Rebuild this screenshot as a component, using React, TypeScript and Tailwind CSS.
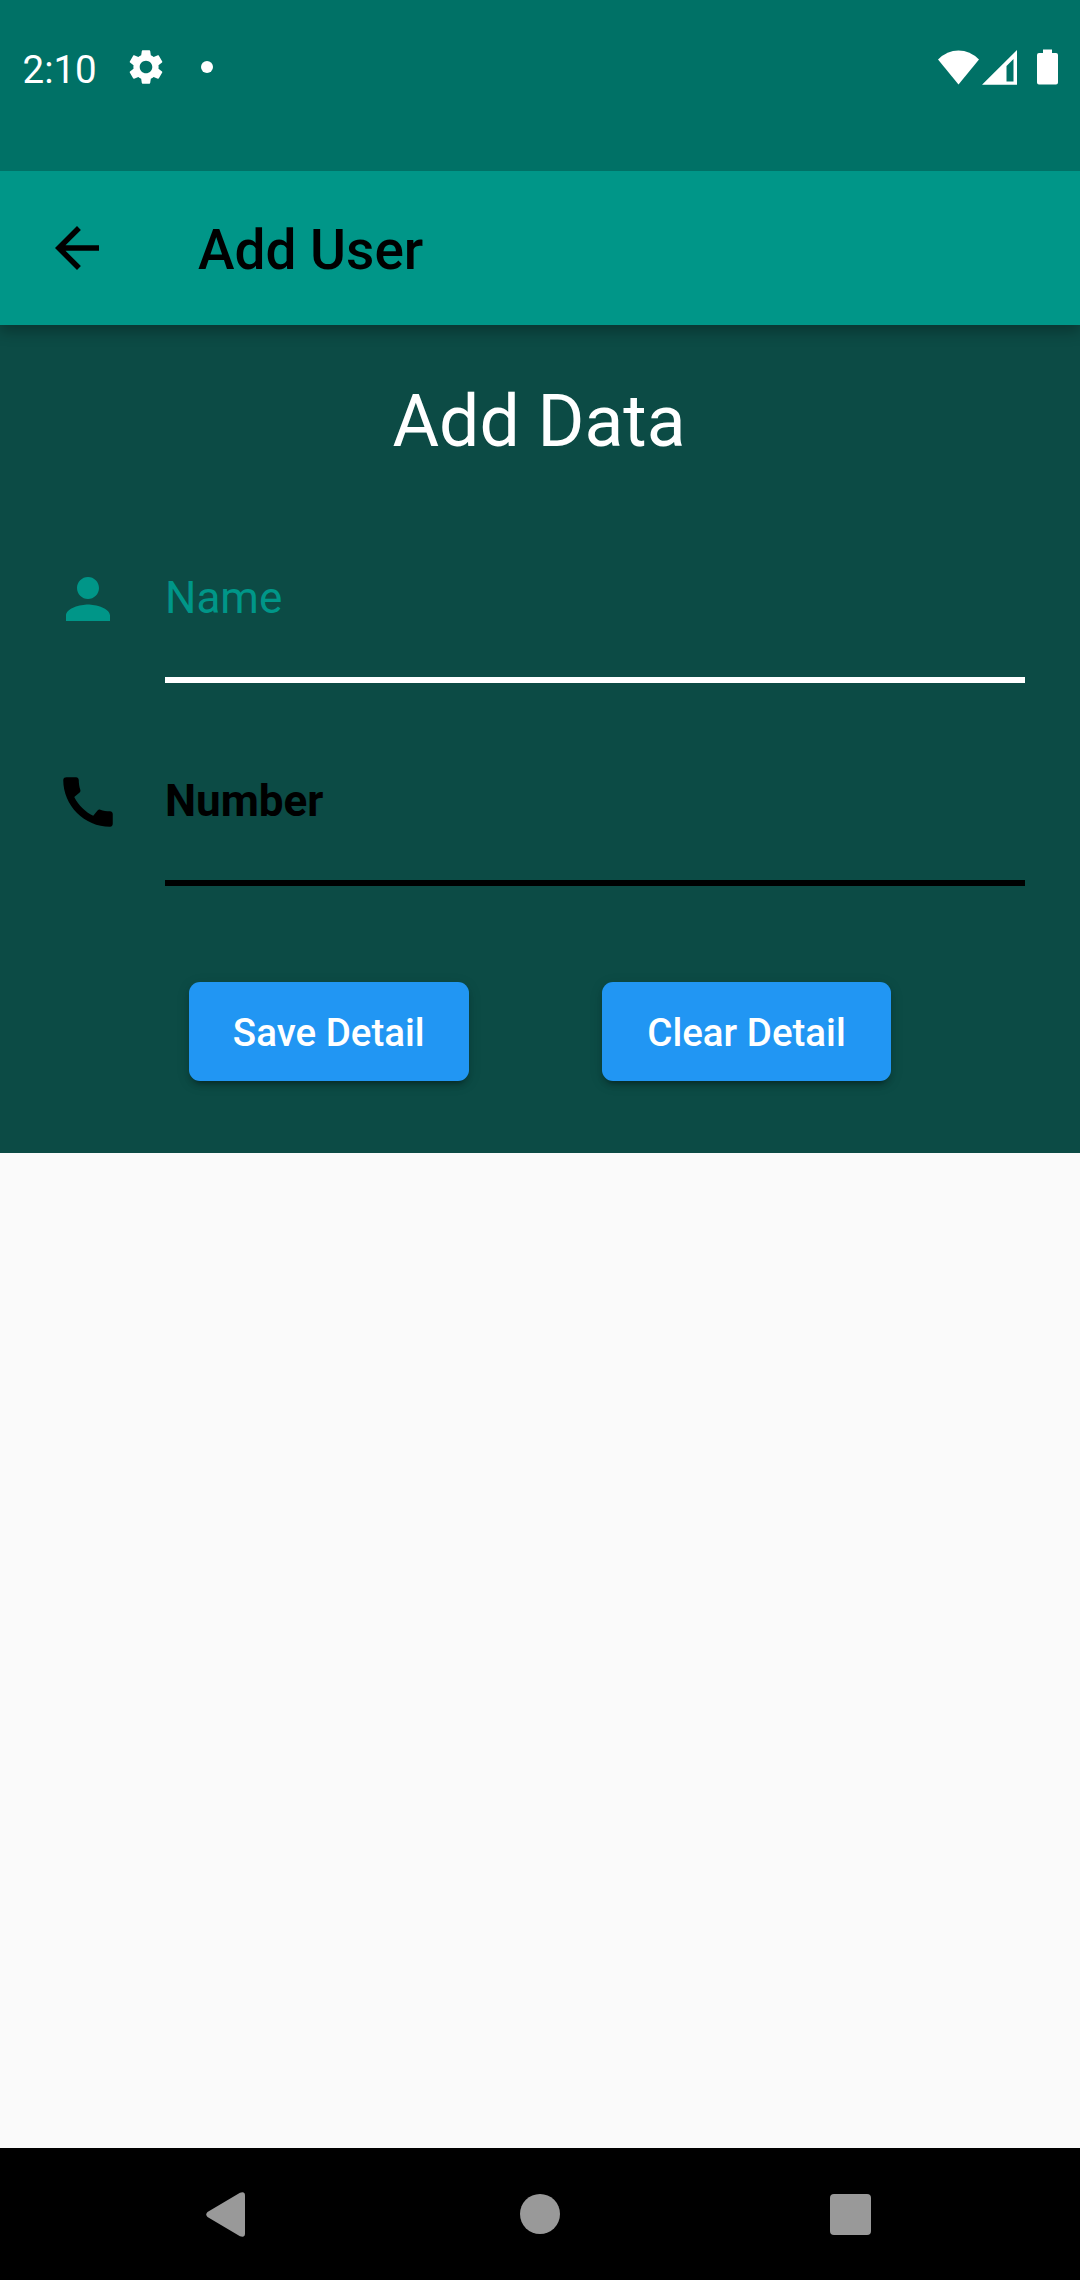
import type { ReactNode } from "react";

function StatusBar() {
  return (
    <header className="relative z-20 flex h-[171px] items-start bg-[#007166] pt-[45px] text-white">
      <span className="ml-[22.5px] w-[75px] text-[38.5px] leading-[50px] whitespace-nowrap">2:10</span>
      <svg className="mt-[1px] ml-[27.5px] size-[42px]" viewBox="0 0 24 24" fill="currentColor">
        <path d="M19.14 12.94c.04-.3.06-.61.06-.94 0-.32-.02-.64-.07-.94l2.03-1.58c.18-.14.23-.41.12-.61l-1.92-3.32c-.12-.22-.37-.29-.59-.22l-2.39.96c-.5-.38-1.03-.7-1.62-.94l-.36-2.54c-.04-.24-.24-.41-.48-.41h-3.84c-.24 0-.43.17-.47.41l-.36 2.54c-.59.24-1.13.57-1.62.94l-2.39-.96c-.22-.08-.47 0-.59.22L2.74 8.87c-.12.21-.08.47.12.61l2.03 1.58c-.05.3-.09.63-.09.94s.02.64.07.94l-2.03 1.58c-.18.14-.23.41-.12.61l1.92 3.32c.12.22.37.29.59.22l2.39-.96c.5.38 1.03.7 1.62.94l.36 2.54c.05.24.24.41.48.41h3.84c.24 0 .44-.17.47-.41l.36-2.54c.59-.24 1.13-.56 1.62-.94l2.39.96c.22.08.47 0 .59-.22l1.92-3.32c.12-.22.07-.47-.12-.61l-2.01-1.58zM12 15.6c-1.98 0-3.6-1.62-3.6-3.6s1.62-3.6 3.6-3.6 3.6 1.62 3.6 3.6-1.62 3.6-3.6 3.6z" />
      </svg>
      <span className="mt-4 ml-[34px] size-3 rounded-full bg-white" />
      <div className="mt-[4px] mr-[22px] ml-auto flex items-start">
        <svg className="h-[36px] w-[41px]" viewBox="0 0 41 36" fill="currentColor">
          <path d="M20.5 35.5 0 10.5Q9 1.5 20.5 1.5T41 10.5Z" />
        </svg>
        <svg className="ml-[3px] h-[36px] w-[35px]" viewBox="0 0 35 36" fill="currentColor" fillRule="evenodd">
          <path d="M0 35.7 35 1V35.7ZM24.5 17V32.5H31.5V10Z" />
        </svg>
        <svg className="ml-5 h-[36px] w-[21px]" viewBox="0 0 21 36" fill="currentColor">
          <path d="M6 0.5H15V4H19Q21 4 21 6V33.5Q21 35.5 19 35.5H2Q0 35.5 0 33.5V6Q0 4 2 4H6Z" />
        </svg>
      </div>
    </header>
  );
}

function AppBar() {
  return (
    <div className="relative z-10 flex h-[154px] items-center bg-[#009688] pl-[44px] text-black shadow-[0_6px_14px_rgba(0,0,0,0.3)]">
      <svg className="size-[66px]" viewBox="0 0 24 24" fill="currentColor">
        <path d="M20 11H7.83l5.59-5.59L12 4l-8 8 8 8 1.41-1.41L7.83 13H20v-2z" />
      </svg>
      <h1 className="mt-[3px] ml-[88px] text-[55px] leading-[64px] font-medium whitespace-nowrap">Add User</h1>
    </div>
  );
}

type FieldProps = { label: string; icon: ReactNode; tone: string; labelStyle: string; line: string };

function Field({ label, icon, tone, labelStyle, line }: FieldProps) {
  return (
    <label className={`flex items-start pr-[55px] pl-[55px] ${tone}`}>
      <svg className="size-[66px] shrink-0" viewBox="0 0 24 24" fill="currentColor">
        {icon}
      </svg>
      <span className={`ml-[44px] block flex-1 pt-[6px] text-[44px] leading-[52px] ${labelStyle}`}>
        {label}
        <span className={`mt-[53px] block h-[5.5px] ${line}`} />
      </span>
    </label>
  );
}

function RaisedButton({ children, size }: { children: ReactNode; size: string }) {
  return (
    <button
      className={`h-[99px] rounded-[11px] bg-[#2196f3] pt-[3px] text-[38.5px] leading-[46px] font-medium whitespace-nowrap text-white shadow-[0_8px_3px_-6px_rgba(0,0,0,0.2),0_5px_5px_rgba(0,0,0,0.14),0_3px_14px_rgba(0,0,0,0.12)] ${size}`}
    >
      {children}
    </button>
  );
}

function NavigationBar() {
  return (
    <nav className="flex h-[132px] items-center justify-between bg-black pr-[209px] pl-[206px] text-[#999999]">
      <svg className="h-[45px] w-[39px]" viewBox="0 0 39 45" fill="currentColor">
        <path d="M1.5 20 34 0.7Q39-1 39 3.5V41.5Q39 46 34 44.3L1.5 25Q-1 22.5 1.5 20Z" />
      </svg>
      <span className="ml-[5px] size-10 rounded-full bg-[#999999]" />
      <span className="size-[41px] rounded-[4px] bg-[#999999]" />
    </nav>
  );
}

export default function App() {
  return (
    <div className="flex h-[2280px] w-[1080px] flex-col overflow-hidden bg-[#fafafa] font-['Roboto',sans-serif]">
      <StatusBar />
      <AppBar />
      <main className="h-[827.5px] bg-[#0c4b45]">
        <h2 className="pt-[55px] pr-[2px] text-center text-[71.5px] leading-[84px] text-white">Add Data</h2>
        <div className="mt-[102px] h-[203px]">
          <Field
            label="Name"
            tone="text-[#009688]"
            labelStyle="font-normal"
            line="bg-white"
            icon={<path d="M12 12c2.21 0 4-1.79 4-4s-1.79-4-4-4-4 1.79-4 4 1.79 4 4 4zm0 2c-2.67 0-8 1.34-8 4v2h16v-2c0-2.66-5.33-4-8-4z" />}
          />
        </div>
        <div className="h-[213px]">
          <Field
            label="Number"
            tone="text-black"
            labelStyle="font-bold"
            line="bg-black"
            icon={<path d="M20.01 15.38c-1.23 0-2.42-.2-3.53-.56-.35-.12-.74-.03-1.01.24l-1.57 1.97c-2.83-1.35-5.48-3.9-6.89-6.83l1.95-1.66c.27-.28.35-.67.24-1.02-.37-1.11-.56-2.3-.56-3.53 0-.54-.45-.99-.99-.99H4.19C3.65 3 3 3.24 3 3.99 3 13.28 10.73 21 20.01 21c.71 0 .99-.63.99-1.18v-3.45c0-.54-.45-.99-.99-.99z" />}
          />
        </div>
        <div className="flex justify-between pr-[189px] pl-[188.5px]">
          <RaisedButton size="w-[280.5px]">Save Detail</RaisedButton>
          <RaisedButton size="w-[289px]">Clear Detail</RaisedButton>
        </div>
      </main>
      <div className="flex-1" />
      <NavigationBar />
    </div>
  );
}
